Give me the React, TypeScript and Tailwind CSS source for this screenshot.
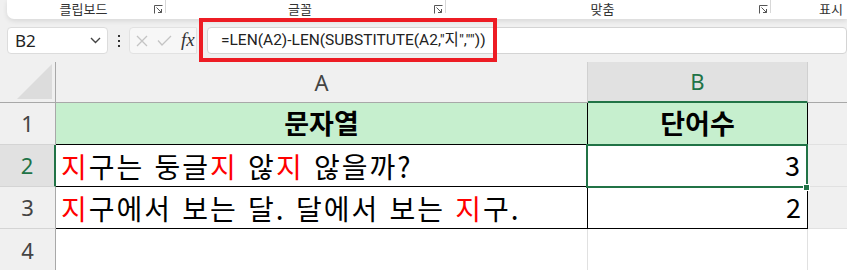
import React from "react";

const Launcher = () => (
  <svg width="9" height="9" viewBox="0 0 9 9" className="shrink-0">
    <path d="M0.5 0.5 H8.5 M0.5 0.5 V8.5" stroke="#555" strokeWidth="1" fill="none" />
    <path d="M2.5 2.5 L7.5 7.5 M7.5 4 V7.5 H4" stroke="#555" strokeWidth="1" fill="none" />
  </svg>
);

const R = ({ children }: { children: React.ReactNode }) => (
  <span className="text-[#ff0000]">{children}</span>
);

export default function App() {
  return (
    <div className="relative w-[847px] h-[270px] overflow-hidden bg-[#f0f0f0] font-['Noto_Sans','Noto_Sans_CJK_KR',sans-serif]">
      {/* Ribbon bottom */}
      <div className="h-[19px] flex pl-[7px]">
        <div className="flex-1 flex bg-white rounded-bl-[7px] shadow-[0_2px_5px_rgba(0,0,0,0.10)] font-['Noto_Sans_CJK_KR',sans-serif] text-[13px] leading-none text-[#333]">
          <div className="w-[159px] flex items-start border-r border-[#d8d8d8] h-[13px] self-start">
            <div className="flex-1 flex justify-center pl-[6px] pt-[2px]">클립보드</div>
            <div className="pt-[5px] pr-[2px]"><Launcher /></div>
          </div>
          <div className="w-[280px] flex items-start border-r border-[#d8d8d8] h-[13px] self-start">
            <div className="flex-1 flex justify-center pt-[2px]">글꼴</div>
            <div className="pt-[5px] pr-[2px]"><Launcher /></div>
          </div>
          <div className="w-[325px] flex items-start border-r border-[#d8d8d8] h-[13px] self-start">
            <div className="flex-1 flex justify-center pt-[2px]">맞춤</div>
            <div className="pt-[5px] pr-[2px]"><Launcher /></div>
          </div>
          <div className="flex-1 flex items-start pt-[2px] pl-[48px]">표시</div>
        </div>
      </div>

      {/* Formula row */}
      <div className="h-[43px] flex items-start pt-[8px] pl-[7px]">
        <div className="w-[101px] h-[27px] bg-white border border-[#dcdcdc] rounded-[4px] flex items-center pl-[7px] pr-[6px] text-[17px] text-[#222]">
          <span className="flex-1">B2</span>
          <svg width="11" height="7" viewBox="0 0 11 7">
            <path d="M1 1 L5.5 5.5 L10 1" stroke="#444" strokeWidth="1.4" fill="none" />
          </svg>
        </div>
        <div className="w-[21px] h-[27px] flex flex-col items-center justify-center gap-[3px]">
          <div className="w-[2px] h-[2px] bg-[#333]" />
          <div className="w-[2px] h-[2px] bg-[#333]" />
          <div className="w-[2px] h-[2px] bg-[#333]" />
        </div>
        <div className="w-[68px] h-[27px] bg-[#f7f7f7] border border-[#e2e2e2] rounded-l-[4px] flex items-center pl-[6px] gap-[9px]">
          <svg width="12" height="12" viewBox="0 0 12 12">
            <path d="M1 1 L11 11 M11 1 L1 11" stroke="#c4c4c4" strokeWidth="1.3" fill="none" />
          </svg>
          <svg width="15" height="11" viewBox="0 0 15 11">
            <path d="M1 5.5 L5 10 L14 1" stroke="#c4c4c4" strokeWidth="1.3" fill="none" />
          </svg>
          <span className="font-['Liberation_Serif',serif] italic text-[19px] leading-none text-[#333] -mt-[2px]">fx</span>
        </div>
        <div className="ml-[10px] flex-1 h-[27px] bg-white border border-[#d4d4d4] rounded-[4px] flex items-center pl-[13px] text-[15.5px] text-[#222] font-['Roboto','Noto_Sans_CJK_KR',sans-serif]">
          <span>=LEN(A2)-LEN(SUBSTITUTE(A2,"지",""))</span>
        </div>
      </div>

      {/* Column header row */}
      <div className="h-[41px] flex border-b border-[#a8a8a8] text-[22px] text-[#444]">
        <div className="w-[56px] border-r border-[#a8a8a8] flex items-end justify-end pr-[3px] pb-[3px]">
          <svg width="35" height="35" viewBox="0 0 35 35">
            <path d="M35 0 L35 35 L0 35 Z" fill="#dcdcdc" />
          </svg>
        </div>
        <div className="w-[532px] border-r border-[#d0d0d0] flex items-center justify-center">A</div>
        <div className="w-[220px] border-r border-[#d0d0d0] bg-[#e1e1e1] flex items-center justify-center text-[#217346] border-b-2 border-b-[#217346] -mb-[1px]">B</div>
        <div className="flex-1" />
      </div>

      {/* Row 1 */}
      <div className="h-[42px] flex font-['Noto_Sans_CJK_KR',sans-serif]">
        <div className="w-[56px] border-r border-[#a8a8a8] border-b border-b-[#d4d4d4] flex items-center justify-center text-[22px] text-[#444] font-['Noto_Sans',sans-serif]">1</div>
        <div className="w-[532px] bg-[#c6efce] border-r border-b border-black flex items-center justify-center text-[27px] font-bold text-black">문자열</div>
        <div className="w-[220px] bg-[#c6efce] border-r border-b border-black flex items-center justify-center text-[27px] font-bold text-black">단어수</div>
        <div className="flex-1 border-b border-[#e1e1e1]" />
      </div>

      {/* Row 2 */}
      <div className="h-[42px] flex font-['Noto_Sans_CJK_KR',sans-serif]">
        <div className="w-[56px] bg-[#e1e1e1] border-r-2 border-r-[#217346] border-b border-b-[#d4d4d4] flex items-center justify-center text-[22px] text-[#217346] font-['Noto_Sans',sans-serif]">2</div>
        <div className="w-[531px] bg-white border-r border-b border-black flex items-center pl-[5px] text-[28px] text-black whitespace-pre">
          <span className="tracking-[2px] [word-spacing:2px]"><R>지</R>구는 둥글<R>지</R> 않<R>지</R> 않을까?</span>
        </div>
        <div className="w-[220px] bg-white border-r border-b border-black flex items-center justify-end pr-[6px] text-[27px] text-black">3</div>
        <div className="flex-1 border-b border-[#e1e1e1]" />
      </div>

      {/* Row 3 */}
      <div className="h-[42px] flex font-['Noto_Sans_CJK_KR',sans-serif]">
        <div className="w-[56px] border-r border-[#a8a8a8] border-b border-b-[#d4d4d4] flex items-center justify-center text-[22px] text-[#444] font-['Noto_Sans',sans-serif]">3</div>
        <div className="w-[532px] bg-white border-r border-b border-black flex items-center pl-[5px] text-[28px] text-black whitespace-pre">
          <span className="tracking-[2px] [word-spacing:2px]"><R>지</R>구에서 보는 달. 달에서 보는 <R>지</R>구.</span>
        </div>
        <div className="w-[220px] bg-white border-r border-b border-black flex items-center justify-end pr-[6px] text-[27px] text-black">2</div>
        <div className="flex-1 border-b border-[#e1e1e1]" />
      </div>

      {/* Row 4 */}
      <div className="h-[42px] flex">
        <div className="w-[56px] border-r border-[#a8a8a8] flex items-center justify-center text-[22px] text-[#444]">4</div>
        <div className="w-[532px] bg-white border-r border-[#e1e1e1]" />
        <div className="w-[220px] bg-white border-r border-[#e1e1e1]" />
        <div className="flex-1 bg-white" />
      </div>

      {/* Selected cell B2 overlay */}
      <div className="absolute left-[586px] top-[144px] w-[222px] h-[44px] border-2 border-[#217346] pointer-events-none" />
      <div className="absolute left-[803px] top-[184px] w-[7px] h-[7px] bg-[#217346] border border-white" />

      {/* Red annotation rectangle */}
      <div className="absolute left-[199px] top-[18px] w-[298px] h-[44px] border-[4px] border-[#ed1c24] pointer-events-none" />
    </div>
  );
}
